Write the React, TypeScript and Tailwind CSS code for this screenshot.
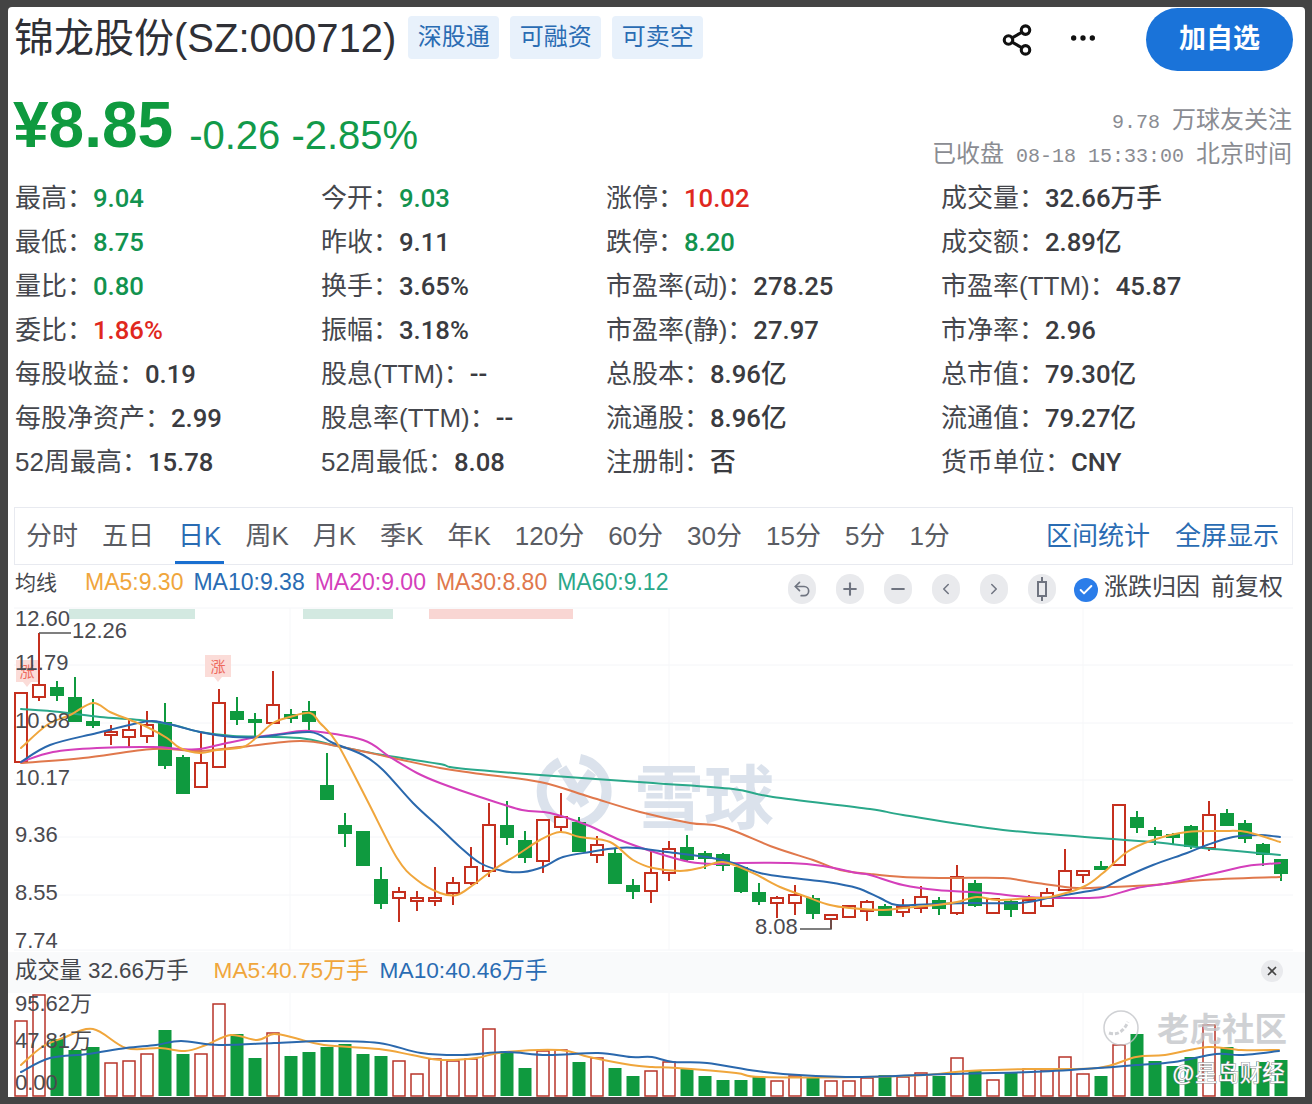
import { Check, ChevronLeft, ChevronRight, Ellipsis, Minus, Plus, Share2, Undo2, X } from 'lucide-react'

const GREEN = '#0f9a3f'
const RED = '#c5301f'

type Stat = { label: string; value: string; color?: string }

const stats: Stat[][] = [
  [
    { label: '最高：', value: '9.04', color: 'text-[#12934f]' },
    { label: '今开：', value: '9.03', color: 'text-[#12934f]' },
    { label: '涨停：', value: '10.02', color: 'text-[#e0281e]' },
    { label: '成交量：', value: '32.66万手' },
  ],
  [
    { label: '最低：', value: '8.75', color: 'text-[#12934f]' },
    { label: '昨收：', value: '9.11' },
    { label: '跌停：', value: '8.20', color: 'text-[#12934f]' },
    { label: '成交额：', value: '2.89亿' },
  ],
  [
    { label: '量比：', value: '0.80', color: 'text-[#12934f]' },
    { label: '换手：', value: '3.65%' },
    { label: '市盈率(动)：', value: '278.25' },
    { label: '市盈率(TTM)：', value: '45.87' },
  ],
  [
    { label: '委比：', value: '1.86%', color: 'text-[#e0281e]' },
    { label: '振幅：', value: '3.18%' },
    { label: '市盈率(静)：', value: '27.97' },
    { label: '市净率：', value: '2.96' },
  ],
  [
    { label: '每股收益：', value: '0.19' },
    { label: '股息(TTM)：', value: '--' },
    { label: '总股本：', value: '8.96亿' },
    { label: '总市值：', value: '79.30亿' },
  ],
  [
    { label: '每股净资产：', value: '2.99' },
    { label: '股息率(TTM)：', value: '--' },
    { label: '流通股：', value: '8.96亿' },
    { label: '流通值：', value: '79.27亿' },
  ],
  [
    { label: '52周最高：', value: '15.78' },
    { label: '52周最低：', value: '8.08' },
    { label: '注册制：', value: '否' },
    { label: '货币单位：', value: 'CNY' },
  ],
]

const tabs = ['分时', '五日', '日K', '周K', '月K', '季K', '年K', '120分', '60分', '30分', '15分', '5分', '1分']

// body top, body bottom, high, low, 1 = red
const candles: number[][] = [
  [693, 762, 693, 762, 1], [685, 697, 633, 701, 1], [688, 695, 681, 701, 0], [698, 721, 677, 722, 0],
  [722, 725, 699, 728, 0], [732, 735, 725, 745, 1], [730, 737, 720, 748, 1], [725, 736, 711, 743, 1],
  [723, 765, 703, 769, 0], [758, 793, 755, 793, 0], [763, 787, 732, 788, 1], [703, 767, 689, 768, 1],
  [712, 719, 697, 725, 0], [720, 722, 713, 738, 0], [705, 723, 671, 723, 1], [715, 718, 709, 723, 0],
  [712, 721, 701, 732, 0], [786, 799, 753, 800, 0], [826, 833, 813, 847, 0], [832, 865, 831, 865, 0],
  [880, 903, 867, 909, 0], [892, 898, 887, 922, 1], [898, 901, 891, 911, 1], [898, 901, 867, 906, 1],
  [883, 893, 877, 905, 1], [867, 883, 847, 885, 1], [825, 871, 803, 877, 1], [826, 837, 801, 845, 0],
  [841, 857, 831, 863, 0], [820, 861, 820, 873, 1], [817, 827, 793, 832, 1], [823, 851, 817, 852, 0],
  [845, 855, 836, 863, 1], [854, 883, 848, 884, 0], [886, 891, 879, 899, 0], [873, 891, 850, 903, 1],
  [849, 873, 841, 881, 1], [848, 859, 835, 862, 0], [854, 858, 851, 869, 0], [855, 865, 853, 871, 0],
  [868, 891, 866, 893, 0], [893, 901, 883, 905, 0], [898, 903, 896, 918, 1], [895, 903, 885, 915, 1],
  [899, 913, 895, 919, 0], [915, 919, 915, 929, 1], [906, 917, 905, 918, 1], [902, 911, 900, 921, 1],
  [907, 915, 904, 915, 0], [907, 912, 899, 917, 1], [897, 908, 886, 913, 1], [901, 908, 897, 915, 0],
  [877, 913, 865, 915, 1], [884, 905, 880, 907, 0], [899, 913, 899, 913, 1], [902, 909, 900, 917, 0],
  [900, 913, 895, 913, 1], [893, 906, 888, 907, 1], [871, 890, 849, 890, 1], [871, 875, 871, 883, 1],
  [867, 869, 861, 869, 0], [805, 865, 805, 865, 1], [818, 827, 811, 833, 0], [831, 835, 827, 845, 0],
  [835, 837, 833, 845, 0], [827, 846, 825, 849, 0], [815, 848, 801, 851, 1], [814, 825, 809, 826, 0],
  [824, 838, 820, 843, 0], [845, 854, 843, 866, 0], [860, 873, 860, 881, 0],
]

// bar top, 1 = red
const volumes: number[][] = [
  [1021, 1], [995, 1], [1039, 0], [1050, 0], [1047, 0], [1063, 1], [1061, 1], [1054, 1], [1030, 0], [1054, 0],
  [1054, 1], [1004, 1], [1034, 0], [1058, 0], [1033, 1], [1056, 0], [1052, 0], [1047, 0], [1044, 0], [1054, 0],
  [1056, 0], [1061, 1], [1074, 1], [1059, 1], [1061, 1], [1059, 1], [1029, 1], [1051, 0], [1068, 0], [1051, 1],
  [1050, 1], [1062, 0], [1058, 1], [1068, 0], [1076, 0], [1071, 1], [1062, 1], [1069, 0], [1076, 0], [1080, 0],
  [1080, 0], [1077, 0], [1081, 1], [1076, 1], [1077, 0], [1081, 1], [1081, 1], [1078, 1], [1075, 0], [1077, 1],
  [1073, 1], [1076, 0], [1058, 1], [1071, 0], [1080, 1], [1072, 0], [1069, 1], [1070, 1], [1057, 1], [1074, 1],
  [1076, 0], [1045, 1], [1034, 0], [1061, 0], [1066, 0], [1057, 0], [1025, 1], [1047, 0], [1066, 0], [1062, 0],
  [1060, 0],
]

const ma5 = '21,748 47,725 70,715 93,703 110,712 130,720 147,727 167,738 180,748 200,753 217,750 243,747 257,737 273,723 290,717 310,713 320,723 337,743 367,800 397,858 417,880 440,893 457,895 473,885 493,870 520,853 540,840 560,832 580,837 610,842 633,860 653,868 680,871 700,868 723,862 753,873 780,887 807,897 830,905 850,908 883,910 903,908 937,905 957,902 977,897 997,900 1030,898 1050,897 1083,887 1103,873 1127,852 1153,840 1187,832 1223,831 1247,832 1280,842'
const ma10 = '21,762 50,745 97,733 143,722 160,722 200,732 233,737 260,737 310,732 333,743 363,755 383,770 413,803 440,828 460,847 480,863 503,871 523,872 543,867 563,857 590,852 617,848 637,848 667,852 707,857 733,863 760,873 793,878 827,882 857,888 880,898 897,905 937,904 970,903 1020,903 1053,897 1083,892 1103,888 1123,878 1153,865 1187,853 1207,845 1233,837 1260,835 1280,837'
const ma20 = '21,762 53,752 97,748 153,747 180,749 200,749 227,743 257,737 280,734 310,731 363,740 390,757 417,773 440,783 480,797 522,810 550,813 587,825 620,840 657,853 690,862 717,864 740,863 790,863 823,866 857,873 870,875 903,885 937,890 987,893 1027,897 1070,898 1103,897 1137,888 1170,883 1220,872 1247,866 1280,863'
const ma30 = '21,763 83,758 153,749 200,751 240,747 300,741 337,746 393,758 440,768 473,773 540,782 590,797 640,812 690,823 723,827 773,847 813,860 840,870 870,874 903,877 947,878 1003,878 1037,883 1077,888 1110,887 1153,885 1203,880 1280,877'
const ma60 = '21,709 60,712 100,717 140,720 173,725 200,732 233,736 300,738 337,746 383,755 440,764 457,768 540,775 653,783 733,789 773,797 870,809 903,815 1003,830 1113,839 1163,843 1203,848 1237,851 1280,855'
const volMa5 = '21,1065 42,1047 63,1038 93,1029 126,1048 160,1048 185,1051 206,1045 231,1035 257,1040 274,1034 295,1038 324,1045 379,1049 412,1055 442,1060 476,1058 505,1052 560,1050 589,1057 631,1065 652,1067 677,1068 736,1073 761,1077 862,1077 925,1075 968,1071 1031,1069 1098,1068 1136,1057 1165,1055 1208,1047 1241,1050 1279,1050'
const volMa10 = '21,1072 50,1058 88,1054 126,1048 156,1045 181,1041 219,1045 274,1043 324,1041 379,1043 421,1053 463,1055 505,1052 547,1055 598,1053 631,1057 652,1057 673,1062 707,1063 757,1071 799,1075 862,1077 947,1074 1031,1072 1098,1068 1136,1065 1174,1062 1216,1054 1241,1055 1279,1051'

// catmull-rom through the sampled points, the real lines are smooth
function smooth(points: string) {
  const p = points.split(' ').map((s) => s.split(',').map(Number))
  let d = `M${p[0][0]} ${p[0][1]}`
  for (let i = 0; i < p.length - 1; i++) {
    const a = p[Math.max(i - 1, 0)]
    const b = p[i]
    const c = p[i + 1]
    const e = p[Math.min(i + 2, p.length - 1)]
    d += `C${b[0] + (c[0] - a[0]) / 6} ${b[1] + (c[1] - a[1]) / 6} ${c[0] - (e[0] - b[0]) / 6} ${c[1] - (e[1] - b[1]) / 6} ${c[0]} ${c[1]}`
  }
  return d
}

function MaLine({ points, color }: { points: string; color: string }) {
  return <path d={smooth(points)} fill="none" stroke={color} strokeWidth="2" strokeLinecap="round" />
}

function PriceChart() {
  const axis: [string, number][] = [['12.60', 626], ['11.79', 670], ['10.98', 728], ['10.17', 785], ['9.36', 842], ['8.55', 900], ['7.74', 948]]
  return (
    <svg className="block w-[1297px] h-[352px]" viewBox="8 600 1297 352">
      {[608, 665, 723, 780, 837, 895, 950].map((y) => (
        <line key={y} x1="14" x2="1293" y1={y} y2={y} stroke="#f4f5f8" />
      ))}
      {[290, 669, 1083].map((x) => (
        <line key={x} x1={x} x2={x} y1="608" y2="950" stroke="#f6f7f9" />
      ))}
      <rect x="69" y="609" width="126" height="10" fill="#d3e9e1" />
      <rect x="303" y="609" width="90" height="10" fill="#d3e9e1" />
      <rect x="429" y="609" width="144" height="10" fill="#f9d6d3" />

      <g fill="none" stroke="#dbe2ec" strokeWidth="10">
        <path d="M560 762A33 33 0 0 0 558 820" />
        <path d="M580 759A33 33 0 0 1 590 820A33 33 0 0 1 570 825" />
        <path d="M562 768L585 805" />
        <path d="M592 772L570 802" />
      </g>
      <text x="634" y="824" fontSize="70" fill="#dbe2ec" fontWeight="700">雪球</text>

      {[[16, 660, 22], [205, 655, 26]].map(([x, y, w]) => (
        <g key={x}>
          <path d={`M${x} ${y}h${w}v22h${-w / 2 + 4}l-4 5l-4 -5h${-w / 2 + 4}z`} fill="#fbdcd8" />
          <text x={x + w / 2} y={y + 17} fontSize="15" textAnchor="middle" fill="#ee6a5e">涨</text>
        </g>
      ))}

      {candles.map(([top, bottom, high, low, up], i) => {
        const x = 21 + i * 18
        const color = up ? RED : GREEN
        return (
          <g key={i}>
            <line x1={x} x2={x} y1={high} y2={low} stroke={color} strokeWidth="2" />
            <rect x={x - 6} y={top} width="12" height={bottom - top} fill={up ? '#fff' : color} stroke={color} strokeWidth="2" />
          </g>
        )
      })}

      <MaLine points={ma60} color="#2aa88a" />
      <MaLine points={ma30} color="#e0784c" />
      <MaLine points={ma20} color="#d43fbb" />
      <MaLine points={ma10} color="#2a68ad" />
      <MaLine points={ma5} color="#f0a63c" />

      <path d="M39 633H71" stroke="#555" strokeWidth="1.5" fill="none" />
      <path d="M800 929H831V919" stroke="#555" strokeWidth="1.5" fill="none" />
      <g fontSize="22" fill="#4a4a4f">
        {axis.map(([label, y]) => (
          <text key={label} x="15" y={y}>{label}</text>
        ))}
        <text x="72" y="638">12.26</text>
        <text x="755" y="934">8.08</text>
      </g>
    </svg>
  )
}

function VolumeChart() {
  return (
    <svg className="block w-[1297px] h-[104px] overflow-visible" viewBox="8 993 1297 104">
      {[290, 669, 1083].map((x) => (
        <line key={x} x1={x} x2={x} y1="993" y2="1095" stroke="#f6f7f9" />
      ))}
      {volumes.map(([top, up], i) => {
        const x = 21 + i * 18
        return up ? (
          <rect key={i} x={x - 6} y={top} width="12" height={1096 - top} fill="#fff" stroke="#b8352a" strokeWidth="1.5" />
        ) : (
          <rect key={i} x={x - 6.5} y={top} width="13" height={1096 - top} fill={GREEN} />
        )
      })}
      <MaLine points={volMa5} color="#f0a63c" />
      <MaLine points={volMa10} color="#2a68ad" />
      <g fontSize="22" fill="#4a4a4f">
        <text x="15" y="1011">95.62万</text>
        <text x="15" y="1048">47.81万</text>
        <text x="15" y="1090">0.00</text>
      </g>
      <g opacity="0.8">
        <circle cx="1121" cy="1028" r="17" fill="none" stroke="#c4c6ca" strokeWidth="1.5" />
        <path d="M1109 1033q12 4 19-11" fill="none" stroke="#c4c6ca" strokeWidth="3" strokeDasharray="4 2" />
        <text x="1157" y="1041" fontSize="32.5" fontWeight="700" fill="#c4c6ca">老虎社区</text>
      </g>
      <text x="1172" y="1081" fontSize="22.5" fill="#fff" stroke="#8d8f92" strokeWidth="1" paintOrder="stroke">@星岛财经</text>
    </svg>
  )
}

function RoundButton({ children }: { children: React.ReactNode }) {
  return <div className="flex items-center justify-center w-[28px] h-[30px] rounded-full bg-[#e9eaed] text-[#6f7480]">{children}</div>
}

export default function App() {
  return (
    <div className="w-[1312px] h-[1104px] overflow-hidden bg-[#444444] pl-[8px] pr-[7px] pt-[7px] font-['Liberation_Sans','Noto_Sans_CJK_SC',sans-serif]">
      <div className="h-[1090px] overflow-hidden rounded-t-[4px] bg-white">
        <div className="flex items-center h-[66px] pl-[6px] pr-[12px]">
          <div className="mb-[5px] text-[40px] leading-none text-[#2f3036] whitespace-nowrap">锦龙股份(SZ:000712)</div>
          <div className="flex gap-[11px] ml-[12px] mb-[6px]">
            {['深股通', '可融资', '可卖空'].map((tag) => (
              <div key={tag} className="flex items-center justify-center w-[91px] h-[43px] rounded-[4px] bg-[#e8f1fb] text-[24px] text-[#2a6cb3]">
                {tag}
              </div>
            ))}
          </div>
          <Share2 className="ml-auto text-[#111]" size={34} strokeWidth={2.2} />
          <Ellipsis className="ml-[33px] mb-[4px] text-[#111]" size={32} />
          <button type="button" className="ml-[47px] mb-[2px] w-[147px] h-[63px] rounded-full bg-[#1a73d9] text-[27px] font-bold text-white">
            加自选
          </button>
        </div>

        <div className="flex items-start justify-between h-[103px] pl-[5px] pr-[13px]">
          <div className="flex items-start">
            <span className="mt-[17px] text-[64px] leading-[70px] font-bold text-[#0f9a3f]">¥8.85</span>
            <span className="mt-[42px] ml-[16px] text-[40px] leading-[40px] text-[#129a4a]">-0.26 -2.85%</span>
          </div>
          <div className="mt-[31px] text-right text-[24px] leading-[31px] text-[#8a8c92]">
            <div>
              <span className="font-['Liberation_Mono',monospace] text-[20px]">9.78 </span>万球友关注
            </div>
            <div>
              已收盘<span className="font-['Liberation_Mono',monospace] text-[20px]"> 08-18 15:33:00 </span>北京时间
            </div>
          </div>
        </div>

        <div className="pl-[7px]">
          {stats.map((row, i) => (
            <div key={i} className="grid grid-cols-[306px_285px_335px_1fr] h-[44px] items-center text-[26px] text-[#45474d]">
              {row.map((stat) => (
                <div key={stat.label} className="whitespace-nowrap">
                  {stat.label}
                  <span className={`font-['Roboto','Noto_Sans_CJK_SC',sans-serif] text-[25.7px] font-medium ${stat.color ?? 'text-[#3a3b40]'}`}>{stat.value}</span>
                </div>
              ))}
            </div>
          ))}
        </div>

        <div className="flex items-stretch justify-between ml-[6px] w-[1279px] h-[58px] mt-[23px] pl-[11px] pr-[13px] border border-[#e8eaf0] text-[26px]">
          <div className="flex gap-[24px]">
            {tabs.map((tab) => (
              <div
                key={tab}
                className={`flex items-center pt-[3px] border-b-[3px] ${tab === '日K' ? 'border-[#1a6fd0] text-[#2a6cb3] px-[3px] -mx-[3px]' : 'border-transparent text-[#5a5c63]'}`}
              >
                {tab}
              </div>
            ))}
          </div>
          <div className="flex items-center gap-[25px] text-[#2a6cb3]">
            <span>区间统计</span>
            <span>全屏显示</span>
          </div>
        </div>

        <div className="flex items-center h-[35px] pl-[7px] pr-[22px] text-[23px]">
          <span className="mr-[28px] text-[21px] text-[#45474d]">均线</span>
          <div className="flex gap-[10px]">
            <span className="text-[#f0a63c]">MA5:9.30</span>
            <span className="text-[#2a6cb3]">MA10:9.38</span>
            <span className="text-[#d43fbb]">MA20:9.00</span>
            <span className="text-[#e0784c]">MA30:8.80</span>
            <span className="text-[#2aa88a]">MA60:9.12</span>
          </div>
          <div className="flex items-center gap-[20px] ml-auto mt-[12px]">
            <RoundButton><Undo2 size={20} /></RoundButton>
            <RoundButton><Plus size={20} strokeWidth={2.5} /></RoundButton>
            <RoundButton><Minus size={20} strokeWidth={2.5} /></RoundButton>
            <RoundButton><ChevronLeft size={18} /></RoundButton>
            <RoundButton><ChevronRight size={18} /></RoundButton>
            <RoundButton>
              <svg width="14" height="26" viewBox="0 0 14 26" fill="none" stroke="currentColor" strokeWidth="2">
                <path d="M7 1v5M7 20v5" />
                <rect x="3" y="6" width="8" height="14" />
              </svg>
            </RoundButton>
          </div>
          <div className="flex items-center justify-center w-[24px] h-[24px] ml-[18px] mt-[14px] rounded-full bg-[#2b7de9] text-white">
            <Check size={16} strokeWidth={3} />
          </div>
          <span className="ml-[6px] mt-[8px] text-[24px] text-[#45474d]">涨跌归因</span>
          <span className="ml-[11px] mt-[8px] text-[24px] text-[#45474d]">前复权</span>
        </div>

        <PriceChart />

        <div className="flex items-center h-[41px] pl-[7px] pr-[22px] pb-[4px] bg-[#f9fafb] text-[22.3px]">
          <span className="text-[#45474d]">成交量 32.66万手</span>
          <span className="ml-[25px] text-[22.7px] text-[#f0a63c]">MA5:40.75万手</span>
          <span className="ml-[11px] text-[22.7px] text-[#2a6cb3]">MA10:40.46万手</span>
          <div className="flex items-center justify-center w-[22px] h-[22px] ml-auto rounded-full bg-[#e9eaed] text-[#444]">
            <X size={14} strokeWidth={3} />
          </div>
        </div>

        <VolumeChart />
      </div>
    </div>
  )
}
